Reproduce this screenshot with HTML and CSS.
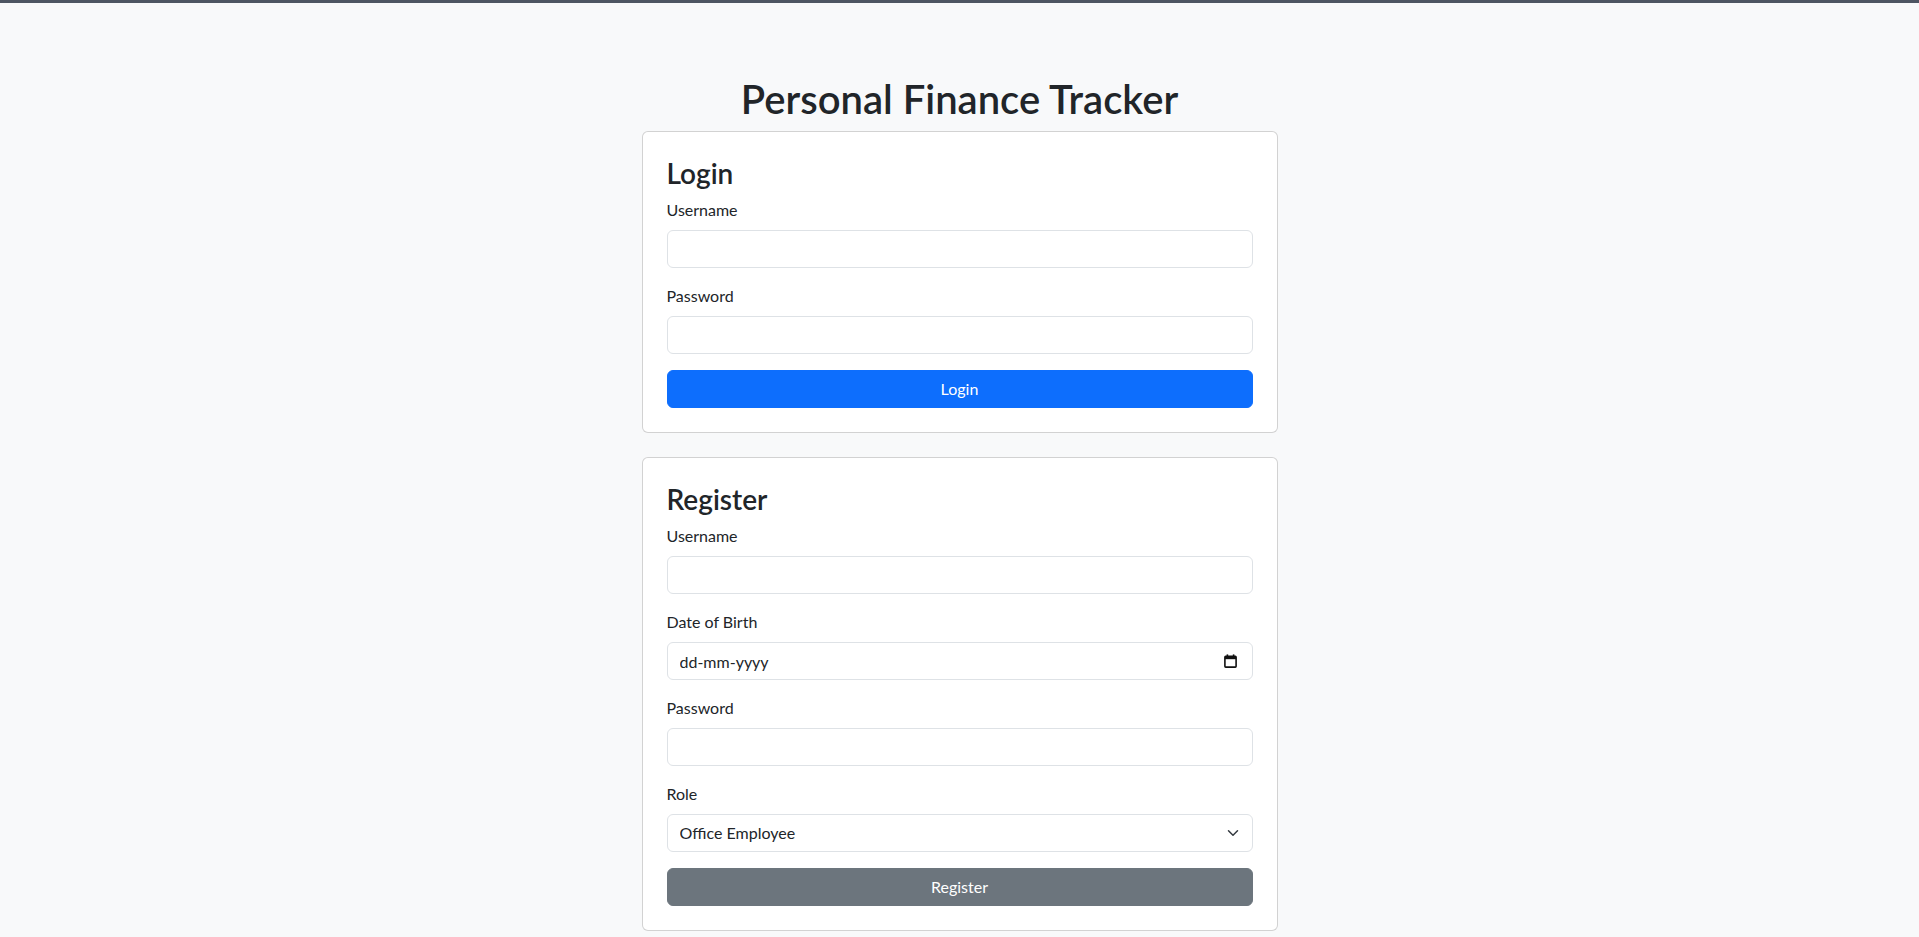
FILE: index.html
```html
<!DOCTYPE html>
<html lang="en">
<head>
<meta charset="utf-8">
<title>Personal Finance Tracker</title>
<link rel="stylesheet" href="styles.css">
</head>
<body>
<div class="topbar"></div>
<main class="container">
  <h1 class="title">Personal Finance Tracker</h1>
  <section class="card">
    <h3 class="card-title">Login</h3>
    <div class="field">
      <label class="label" for="lu">Username</label>
      <input class="control" id="lu" type="text">
    </div>
    <div class="field">
      <label class="label" for="lp">Password</label>
      <input class="control" id="lp" type="password">
    </div>
    <button class="btn btn-primary" type="button">Login</button>
  </section>
  <section class="card card-gap">
    <h3 class="card-title">Register</h3>
    <div class="field">
      <label class="label" for="ru">Username</label>
      <input class="control" id="ru" type="text">
    </div>
    <div class="field">
      <label class="label" for="rd">Date of Birth</label>
      <div class="control-wrap">
        <input class="control control-date" id="rd" type="text" placeholder="dd-mm-yyyy">
        <svg class="cal-icon" width="13" height="14" viewBox="0 0 13 14" aria-hidden="true">
          <rect x="0.9" y="2.4" width="11.2" height="10.7" rx="0.8" fill="none" stroke="#111" stroke-width="1.6"/>
          <rect x="0.9" y="2.4" width="11.2" height="2.8" fill="#111"/>
          <rect x="2.6" y="0.4" width="1.6" height="3" fill="#111"/>
          <rect x="8.8" y="0.4" width="1.6" height="3" fill="#111"/>
        </svg>
      </div>
    </div>
    <div class="field">
      <label class="label" for="rp">Password</label>
      <input class="control" id="rp" type="password">
    </div>
    <div class="field">
      <label class="label" for="rr">Role</label>
      <div class="control-wrap">
        <select class="control control-select" id="rr">
          <option>Office Employee</option>
        </select>
        <svg class="chev-icon" width="12" height="12" viewBox="0 0 16 16" aria-hidden="true">
          <path d="m2 5 6 6 6-6" fill="none" stroke="#343a40" stroke-width="2" stroke-linecap="round" stroke-linejoin="round"/>
        </svg>
      </div>
    </div>
    <button class="btn btn-secondary" type="button">Register</button>
  </section>
</main>
</body>
</html>
```

FILE: styles.css
```css
* { box-sizing: border-box; }

html, body {
  margin: 0;
  padding: 0;
}

body {
  background: #f8f9fa;
  color: #212529;
  font-family: "Segoe UI", Lato, "Noto Sans", "Liberation Sans", sans-serif;
  font-size: 16px;
  line-height: 1.5;
}

.topbar {
  height: 3px;
  background: #4d5562;
}

.container {
  width: 636px;
  margin: 0 auto;
  padding-top: 72px;
  padding-bottom: 24px;
}

.title {
  margin: 0 0 8px;
  font-size: 40px;
  font-weight: 600;
  line-height: 48px;
  text-align: center;
}

.card {
  background: #fff;
  border: 1px solid rgba(0, 0, 0, 0.175);
  border-radius: 6px;
  padding: 24px;
  display: flex;
  flex-direction: column;
}

.card-gap { margin-top: 24px; }

.card-title {
  margin: 0 0 8px;
  font-size: 28px;
  font-weight: 600;
  line-height: 34px;
}

.field {
  display: flex;
  flex-direction: column;
  margin-bottom: 16px;
}

.label {
  display: block;
  margin-bottom: 8px;
  font-size: 16px;
  line-height: 24px;
}

.control-wrap { position: relative; }

.control {
  display: block;
  width: 100%;
  height: 38px;
  padding: 6px 12px;
  font: inherit;
  font-size: 16px;
  line-height: 24px;
  color: #212529;
  background: #fff;
  border: 1px solid #dee2e6;
  border-radius: 6px;
  outline: none;
  appearance: none;
  -webkit-appearance: none;
}

.control-date::placeholder { color: #212529; opacity: 1; }

.control-select { padding-right: 36px; }

.cal-icon {
  position: absolute;
  right: 16px;
  top: 12px;
}

.chev-icon {
  position: absolute;
  right: 14px;
  top: 13px;
  pointer-events: none;
}

.btn {
  display: block;
  width: 100%;
  height: 38px;
  padding: 6px 12px;
  font: inherit;
  font-size: 16px;
  line-height: 24px;
  color: #fff;
  border: 1px solid transparent;
  border-radius: 6px;
  text-align: center;
  cursor: pointer;
}

.btn-primary { background: #0d6efd; border-color: #0d6efd; }
.btn-secondary { background: #6c757d; border-color: #6c757d; }
```
